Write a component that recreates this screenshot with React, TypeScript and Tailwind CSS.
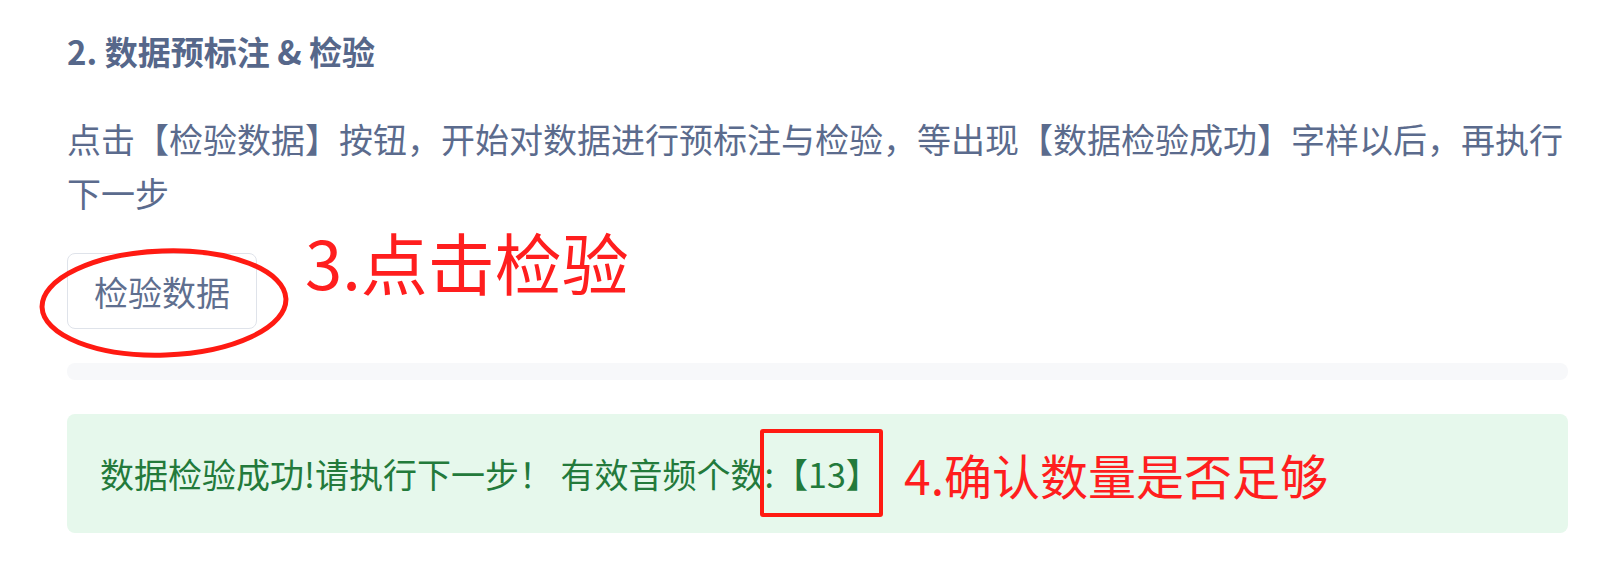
import React from 'react';

const font = { fontFamily: '"Noto Sans CJK SC", "Noto Sans", sans-serif' };

const App: React.FC = () => {
  return (
    <div className="w-[1602px] h-[562px] bg-white pl-[67px] pr-[34px] pt-[26px] overflow-hidden" style={font}>
      <h2 className="text-[33px] leading-[51px] font-bold text-[#56678a]">2. 数据预标注 &amp; 检验</h2>

      <p className="mt-[35px] text-[34px] leading-[54px] text-[#5b6b8d]">
        点击【检验数据】按钮，开始对数据进行预标注与检验，等出现【数据检验成功】字样以后，再执行下一步
      </p>

      {/* button row + annotation */}
      <div className="relative mt-[33px] flex items-start">
        <button className="h-[76px] w-[190px] rounded-[8px] border border-[#dfe3ea] bg-white text-[34px] text-[#5f6f8f]">
          检验数据
        </button>
        <svg className="absolute left-[-29px] top-[-6px]" width="252" height="112" viewBox="0 0 252 112">
          <ellipse cx="126" cy="56" rx="122" ry="52" fill="none" stroke="#ff1a12" strokeWidth="5" transform="rotate(-2 126 56)" />
        </svg>
        <span className="ml-[48px] -mt-[26px] text-[67px] leading-none text-[#ff1e1e]">3.点击检验</span>
      </div>

      <div className="mt-[34px] h-[17px] rounded-[8px] bg-[#f7f8fa]" />

      {/* success alert */}
      <div className="relative mt-[34px] h-[119px] rounded-[8px] bg-[#e6f8ec] pl-[33px] flex items-center">
        <span className="text-[34px] text-[#237a3b]">
          数据检验成功!请执行下一步！ 有效音频个数:【13】
        </span>
        <span className="absolute left-[837px] top-1/2 -translate-y-1/2 text-[48px] leading-none text-[#ff1e1e]">
          4.确认数量是否足够
        </span>
        <div className="absolute left-[693px] top-[15px] h-[88px] w-[123px] rounded-[3px] border-[4px] border-[#ff1a12]" />
      </div>
    </div>
  );
};

export default App;
